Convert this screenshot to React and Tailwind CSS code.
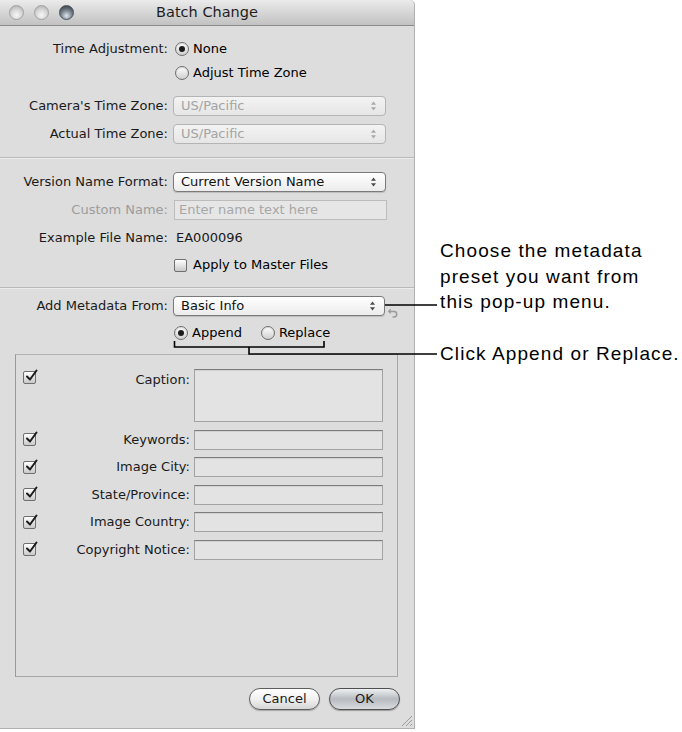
import React from 'react';

const ui = { fontFamily: '"DejaVu Sans", Verdana, sans-serif' };
const note = { fontFamily: '"Liberation Sans", Arial, sans-serif' };

const Radio = ({ checked }) => (
  <span className="w-[14px] h-[14px] rounded-full border border-[#6f6f6f] bg-gradient-to-b from-white to-[#cfcfcf] shadow-[inset_0_1px_1px_rgba(0,0,0,0.15)] flex items-center justify-center shrink-0">
    {checked && <span className="w-[6px] h-[6px] rounded-full bg-[#1a1a1a]" />}
  </span>
);

const Checkbox = ({ checked }) => (
  <span className="relative w-[13px] h-[13px] rounded-[2px] border border-[#6f6f6f] bg-gradient-to-b from-white to-[#c9c9c9] shrink-0">
    {checked && (
      <svg viewBox="0 0 14 14" className="absolute left-[0px] top-[-3px] w-[14px] h-[14px]">
        <path d="M3 7.5 L6 10.5 L12.5 1.5" fill="none" stroke="#1c1c1c" strokeWidth="2" strokeLinecap="round" strokeLinejoin="round" />
      </svg>
    )}
  </span>
);

const Arrows = ({ color }) => (
  <svg viewBox="0 0 8 12" className="w-[7px] h-[10px]">
    <path d="M4 0.5 L7 4.5 H1 Z" fill={color} />
    <path d="M4 11.5 L7 7.5 H1 Z" fill={color} />
  </svg>
);

const Popup = ({ value, disabled, width = 'w-[213px]' }) => (
  <div
    className={`${width} h-[20px] rounded-[4px] border flex items-center justify-between pl-[7px] pr-[8px] bg-gradient-to-b ${
      disabled
        ? 'border-[#b4b4b4] from-[#f3f3f3] to-[#e6e6e6] text-[#a4a4a4]'
        : 'border-[#7a7a7a] from-white to-[#ececec] text-[#111] shadow-[0_1px_1px_rgba(0,0,0,0.15)]'
    }`}
  >
    <span>{value}</span>
    <Arrows color={disabled ? '#a8a8a8' : '#4a4a4a'} />
  </div>
);

const Label = ({ children, dim }) => (
  <div className={`w-[168px] shrink-0 text-right ${dim ? 'text-[#9c9c9c]' : 'text-[#1a1a1a]'}`}>{children}</div>
);

const Row = ({ label, dim, children, className = '' }) => (
  <div className={`flex items-center h-[24px] ${className}`}>
    <Label dim={dim}>{label}</Label>
    <div className="ml-[5px] flex items-center">{children}</div>
  </div>
);

const Separator = ({ className = '' }) => (
  <div className={`h-[2px] border-t border-[#b9b9b9] bg-[#ececec] ${className}`} />
);

const Field = ({ tall }) => (
  <div className={`w-[189px] ${tall ? 'h-[53px]' : 'h-[20px]'} border border-[#a3a3a3] border-t-[#7d7d7d] bg-[#e3e3e3] shadow-[inset_0_1px_0_rgba(0,0,0,0.08)]`} />
);

const metaRows = ['Keywords:', 'Image City:', 'State/Province:', 'Image Country:', 'Copyright Notice:'];

const Light = ({ active }) => (
  <span
    className={`w-[15px] h-[15px] rounded-full border ${
      active
        ? 'border-[#4a525a] bg-[radial-gradient(circle_at_50%_75%,#dfe7ef,#7d8791_45%,#3c434b_85%)]'
        : 'border-[#a2a2a2] bg-[radial-gradient(circle_at_50%_70%,#f7f7f7,#d6d6d6_50%,#b0b0b0_90%)]'
    }`}
  />
);

export default function App() {
  return (
    <div className="relative w-[682px] h-[732px] bg-white flex text-[13px]" style={ui}>
      {/* Dialog window */}
      <div className="relative w-[415px] h-[729px] bg-[#dddddd] border-r border-b border-[#b0b0b0] rounded-tr-[5px] flex flex-col">
        <div className="h-[26px] shrink-0 flex items-center relative border-b border-[#8c8c8c] rounded-tr-[5px] bg-gradient-to-b from-[#ebebeb] via-[#d6d6d6] to-[#c2c2c2]">
          <div className="flex items-center gap-[10px] pl-[9px]">
            <Light />
            <Light />
            <Light active />
          </div>
          <div className="absolute inset-0 flex items-center justify-center text-[14.5px] text-[#1e1e1e]">Batch Change</div>
        </div>

        <div className="pt-[10px] flex flex-col">
          <Row label="Time Adjustment:" className="h-[25px]">
            <span className="ml-[2px] flex items-center gap-[4px]"><Radio checked /> None</span>
          </Row>
          <Row label="">
            <span className="ml-[2px] flex items-center gap-[4px]"><Radio /> Adjust Time Zone</span>
          </Row>
          <Row label="Camera's Time Zone:" className="mt-[9px]">
            <Popup value="US/Pacific" disabled />
          </Row>
          <Row label="Actual Time Zone:" className="mt-[4px]">
            <Popup value="US/Pacific" disabled />
          </Row>

          <Separator className="mt-[11px]" />

          <Row label="Version Name Format:" className="mt-[11px]">
            <Popup value="Current Version Name" />
          </Row>
          <Row label="Custom Name:" dim className="mt-[4px]">
            <div className="w-[213px] h-[20px] ml-[1px] border border-[#bcbcbc] bg-[#e6e6e6] flex items-center pl-[4px] text-[#a6a6a6]">
              Enter name text here
            </div>
          </Row>
          <Row label="Example File Name:" className="mt-[4px]">
            <span className="ml-[3px] text-[#1a1a1a]">EA000096</span>
          </Row>
          <Row label="" className="mt-[3px]">
            <span className="ml-[1px] flex items-center gap-[6px]"><Checkbox /> Apply to Master Files</span>
          </Row>

          <Separator className="mt-[10px]" />

          <Row label="Add Metadata From:" className="mt-[5px]">
            <Popup value="Basic Info" width="w-[212px]" />
            <svg viewBox="0 0 12 12" className="w-[11px] h-[11px] ml-[3px] mt-[12px]">
              <path d="M3 2.5 L0.8 4.8 L3 7" fill="none" stroke="#9a9a9a" strokeWidth="1.4" />
              <path d="M1 4.8 H6.5 A3 3 0 0 1 6.5 10.8 H5" fill="none" stroke="#9a9a9a" strokeWidth="1.6" />
            </svg>
          </Row>
          <Row label="" className="mt-[3px]">
            <span className="ml-[1px] flex items-center gap-[4px]"><Radio checked /> Append</span>
            <span className="ml-[19px] flex items-center gap-[4px]"><Radio /> Replace</span>
          </Row>

          {/* Metadata fields box */}
          <div className="mt-[9px] ml-[15px] w-[383px] h-[323px] border border-[#a6a6a6] border-l-[#999] border-t-[#b3b3b3] pt-[14px] pl-[7px] flex flex-col gap-[7.5px]">
            <div className="flex items-start">
              <span className="mt-[2px] flex"><Checkbox checked /></span>
              <div className="w-[154px] text-right text-[#1a1a1a] mt-[1px]">Caption:</div>
              <div className="ml-[4px]"><Field tall /></div>
            </div>
            {metaRows.map((r) => (
              <div key={r} className="flex items-center">
                <Checkbox checked />
                <div className="w-[154px] text-right text-[#1a1a1a]">{r}</div>
                <div className="ml-[4px]"><Field /></div>
              </div>
            ))}
          </div>

          <div className="mt-[11px] flex justify-end gap-[9px] pr-[14px]">
            <button className="w-[71px] h-[22px] rounded-full border border-[#5e5e5e] bg-gradient-to-b from-white via-[#f1f1f1] to-[#d6d6d6] text-[#1a1a1a] shadow-[0_1px_1px_rgba(0,0,0,0.25)]">Cancel</button>
            <button className="w-[71px] h-[22px] rounded-full border border-[#4f4f4f] bg-gradient-to-b from-[#eef0f2] via-[#b7bbc0] to-[#d9dcdf] text-[#1a1a1a] shadow-[0_1px_1px_rgba(0,0,0,0.3)]">OK</button>
          </div>
        </div>

        {/* resize grip */}
        <svg viewBox="0 0 14 14" className="absolute right-[1px] bottom-[1px] w-[14px] h-[14px]">
          <path d="M13 3 L3 13 M13 7 L7 13 M13 11 L11 13" stroke="#9c9c9c" strokeWidth="1" />
        </svg>
      </div>

      {/* Annotations */}
      <div className="ml-[25px] flex flex-col text-[19px] tracking-[1.1px] text-black" style={note}>
        <div className="mt-[238px] leading-[25.5px]">
          <div>Choose the metadata</div>
          <div>preset you want from</div>
          <div>this pop-up menu.</div>
        </div>
        <div className="mt-[26px] leading-[25.5px]">Click Append or Replace.</div>
      </div>

      {/* callout lines */}
      <svg className="absolute inset-0 w-[682px] h-[732px] pointer-events-none" viewBox="0 0 682 732">
        <path d="M385 305 H437" stroke="#000" strokeWidth="1.6" fill="none" />
        <path d="M174.5 341 V347 H324 V341" stroke="#000" strokeWidth="1.6" fill="none" />
        <path d="M249 347 V354 H437" stroke="#000" strokeWidth="1.6" fill="none" />
      </svg>
    </div>
  );
}
